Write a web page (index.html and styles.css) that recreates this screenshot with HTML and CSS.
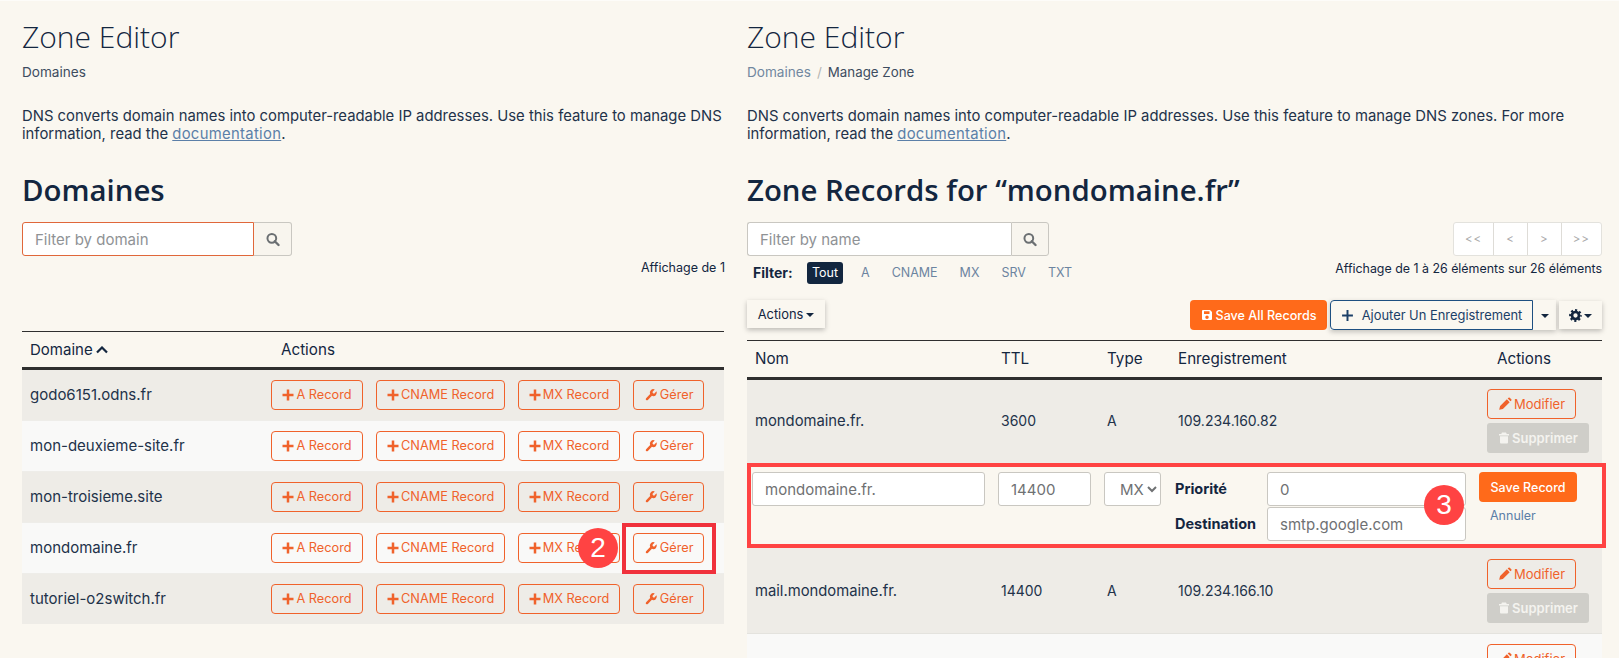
FILE: index.html
```html
<!DOCTYPE html>
<html lang="fr">
<head>
<meta charset="utf-8">
<title>Zone Editor</title>
<link rel="stylesheet" href="styles.css">
</head>
<body>
<svg class="defs" width="0" height="0" aria-hidden="true">
  <symbol id="i-plus" viewBox="0 0 24 24"><path d="M9.500 1h5v8.500H23v5h-8.500V23h-5v-8.500H1v-5h8.500z"/></symbol>
  <symbol id="i-thin-plus" viewBox="0 0 24 24"><path d="M10.200 2h3.600v8.200H22v3.600h-8.200V22h-3.600v-8.200H2v-3.600h8.200z"/></symbol>
  <symbol id="i-wrench" viewBox="0 0 24 24"><path d="M14.700 6.300a1 1 0 0 0 0 1.400l1.600 1.600a1 1 0 0 0 1.400 0l3.770-3.770a6 6 0 0 1-7.940 7.940l-6.910 6.910a2.120 2.120 0 0 1-3-3l6.910-6.910a6 6 0 0 1 7.940-7.940l-3.760 3.760z"/></symbol>
  <symbol id="i-pencil" viewBox="0 0 24 24"><path d="M2 22l1.600-6.400L15.200 4l4.800 4.800L8.400 20.400zM16.600 2.600l1.400-1.400a1.500 1.500 0 0 1 2.100 0l2.700 2.700a1.500 1.500 0 0 1 0 2.100l-1.400 1.400z"/></symbol>
  <symbol id="i-trash" viewBox="0 0 24 24"><path d="M8 1h8l1.500 3H22v3H2V4h4.500zM4 8.500h16V21a2 2 0 0 1-2 2H6a2 2 0 0 1-2-2z"/></symbol>
  <symbol id="i-save" viewBox="0 0 24 24"><path fill-rule="evenodd" d="M4 2h14l4 4v14a2 2 0 0 1-2 2H4a2 2 0 0 1-2-2V4a2 2 0 0 1 2-2zm2 2.500V10h11V4.500zM12 13a3.500 3.500 0 1 0 0 7 3.500 3.500 0 0 0 0-7z"/></symbol>
  <symbol id="i-search" viewBox="0 0 24 24"><circle cx="10" cy="10" r="7.500" fill="none" stroke="currentColor" stroke-width="3.400"/><path d="M15 15l6.500 6.500" stroke="currentColor" stroke-width="4" stroke-linecap="round"/></symbol>
  <symbol id="i-cog" viewBox="0 0 24 24"><circle cx="12" cy="12" r="6.500" fill="none" stroke="currentColor" stroke-width="5"/><circle cx="12" cy="12" r="9.800" fill="none" stroke="currentColor" stroke-width="4" stroke-dasharray="3.900 3.800" stroke-dashoffset="2"/></symbol>
</svg>

<div class="pane pane-left">
  <h1>Zone Editor</h1>
  <div class="crumbs"><span>Domaines</span></div>
  <p class="intro">DNS converts domain names into computer-readable IP addresses. Use this feature to manage DNS<br>information, read the <a href="#">documentation</a>.</p>
  <h2>Domaines</h2>
  <div class="search search-domain">
    <input class="search-input focus" placeholder="Filter by domain">
    <button class="search-btn"><svg class="ico-search"><use href="#i-search"/></svg></button>
  </div>
  <div class="info-left">Affichage de 1</div>

  <div class="dom-table">
    <div class="dom-head">
      <div class="dom-name">Domaine <svg class="chev" viewBox="0 0 12 8"><path d="M1 6.500L6 1.500l5 5" fill="none" stroke="currentColor" stroke-width="2.200"/></svg></div>
      <div class="dom-act-title">Actions</div>
    </div>
    <div class="dom-row">
      <div class="dom-name">godo6151.odns.fr</div>
      <div class="dom-actions">
        <a class="btn b-a"><svg class="ic"><use href="#i-plus"/></svg>A Record</a>
        <a class="btn b-c"><svg class="ic"><use href="#i-plus"/></svg>CNAME Record</a>
        <a class="btn b-m"><svg class="ic"><use href="#i-plus"/></svg>MX Record</a>
        <a class="btn b-g"><svg class="ic ic-w"><use href="#i-wrench"/></svg>Gérer</a>
      </div>
    </div>
    <div class="dom-row">
      <div class="dom-name">mon-deuxieme-site.fr</div>
      <div class="dom-actions">
        <a class="btn b-a"><svg class="ic"><use href="#i-plus"/></svg>A Record</a>
        <a class="btn b-c"><svg class="ic"><use href="#i-plus"/></svg>CNAME Record</a>
        <a class="btn b-m"><svg class="ic"><use href="#i-plus"/></svg>MX Record</a>
        <a class="btn b-g"><svg class="ic ic-w"><use href="#i-wrench"/></svg>Gérer</a>
      </div>
    </div>
    <div class="dom-row">
      <div class="dom-name">mon-troisieme.site</div>
      <div class="dom-actions">
        <a class="btn b-a"><svg class="ic"><use href="#i-plus"/></svg>A Record</a>
        <a class="btn b-c"><svg class="ic"><use href="#i-plus"/></svg>CNAME Record</a>
        <a class="btn b-m"><svg class="ic"><use href="#i-plus"/></svg>MX Record</a>
        <a class="btn b-g"><svg class="ic ic-w"><use href="#i-wrench"/></svg>Gérer</a>
      </div>
    </div>
    <div class="dom-row">
      <div class="dom-name">mondomaine.fr</div>
      <div class="dom-actions">
        <a class="btn b-a"><svg class="ic"><use href="#i-plus"/></svg>A Record</a>
        <a class="btn b-c"><svg class="ic"><use href="#i-plus"/></svg>CNAME Record</a>
        <a class="btn b-m"><svg class="ic"><use href="#i-plus"/></svg>MX Record</a>
        <a class="btn b-g"><svg class="ic ic-w"><use href="#i-wrench"/></svg>Gérer</a>
      </div>
      <span class="step step-2">2</span>
      <span class="mark"></span>
    </div>
    <div class="dom-row">
      <div class="dom-name">tutoriel-o2switch.fr</div>
      <div class="dom-actions">
        <a class="btn b-a"><svg class="ic"><use href="#i-plus"/></svg>A Record</a>
        <a class="btn b-c"><svg class="ic"><use href="#i-plus"/></svg>CNAME Record</a>
        <a class="btn b-m"><svg class="ic"><use href="#i-plus"/></svg>MX Record</a>
        <a class="btn b-g"><svg class="ic ic-w"><use href="#i-wrench"/></svg>Gérer</a>
      </div>
    </div>
  </div>
</div>

<div class="pane pane-right">
  <h1>Zone Editor</h1>
  <div class="crumbs"><a href="#">Domaines</a><span class="sep">/</span><span class="crumb-now">Manage Zone</span></div>
  <p class="intro">DNS converts domain names into computer-readable IP addresses. Use this feature to manage DNS zones. For more<br>information, read the <a href="#">documentation</a>.</p>
  <h2>Zone Records for “mondomaine.fr”</h2>

  <div class="controls">
    <div class="controls-left">
      <div class="search search-name">
        <input class="search-input" placeholder="Filter by name">
        <button class="search-btn"><svg class="ico-search"><use href="#i-search"/></svg></button>
      </div>
      <div class="filters">
        <strong class="filter-label">Filter:</strong>
        <span class="chip">Tout</span>
        <a class="flt">A</a>
        <a class="flt">CNAME</a>
        <a class="flt">MX</a>
        <a class="flt">SRV</a>
        <a class="flt">TXT</a>
      </div>
    </div>
    <div class="controls-right">
      <div class="pager"><span>&lt;&lt;</span><span>&lt;</span><span>&gt;</span><span>&gt;&gt;</span></div>
      <div class="info-right">Affichage de 1 à 26 éléments sur 26 éléments</div>
    </div>
  </div>

  <div class="toolbar">
    <button class="tb-actions">Actions<i class="caret"></i></button>
    <div class="tb-right">
      <button class="tb-save"><svg class="ic-save"><use href="#i-save"/></svg>Save All Records</button>
      <div class="tb-split">
        <button class="tb-add"><svg class="ic-add"><use href="#i-thin-plus"/></svg>Ajouter Un Enregistrement</button>
        <button class="tb-drop"><i class="caret"></i></button>
      </div>
      <button class="tb-gear"><svg class="ic-cog"><use href="#i-cog"/></svg><i class="caret"></i></button>
    </div>
  </div>

  <div class="rec-table">
    <div class="rec-head rec-grid">
      <div>Nom</div><div>TTL</div><div>Type</div><div>Enregistrement</div><div class="act-title">Actions</div>
    </div>
    <div class="rec-row rec-grid r1">
      <div class="cell-name">mondomaine.fr.</div><div>3600</div><div>A</div><div>109.234.160.82</div>
      <div class="rec-actions">
        <a class="btn b-mod"><svg class="ic ic-p"><use href="#i-pencil"/></svg>Modifier</a>
        <a class="btn-off"><svg class="ic"><use href="#i-trash"/></svg>Supprimer</a>
      </div>
    </div>
    <div class="edit-row">
      <input class="field f-name" value="mondomaine.fr.">
      <input class="field f-ttl" value="14400">
      <select class="field f-type"><option>MX</option></select>
      <div class="mx-fields">
        <label>Priorité</label><input class="field" value="0">
        <label>Destination</label><input class="field" value="smtp.google.com">
        <span class="step step-3">3</span>
      </div>
      <div class="edit-actions">
        <button class="btn-save">Save Record</button>
        <a class="cancel">Annuler</a>
      </div>
    </div>
    <div class="rec-row rec-grid r3">
      <div class="cell-name">mail.mondomaine.fr.</div><div>14400</div><div>A</div><div>109.234.166.10</div>
      <div class="rec-actions">
        <a class="btn b-mod"><svg class="ic ic-p"><use href="#i-pencil"/></svg>Modifier</a>
        <a class="btn-off"><svg class="ic"><use href="#i-trash"/></svg>Supprimer</a>
      </div>
    </div>
    <div class="rec-row rec-grid r4">
      <div></div><div></div><div></div><div></div>
      <div class="rec-actions">
        <a class="btn b-mod"><svg class="ic ic-p"><use href="#i-pencil"/></svg>Modifier</a>
      </div>
    </div>
  </div>
</div>
</body>
</html>
```
FILE: styles.css
```css
* { box-sizing: border-box; }
html, body { margin: 0; height: 658px; overflow: hidden; }
body {
  display: flex;
  background: #faf7f0;
  box-shadow: inset 0 1px 0 #fdfcf9;
  color: #13263f;
  font-family: Inter, "Noto Sans", sans-serif;
  font-size: 14px;
  line-height: 18px;
}
.defs { position: absolute; }
a { color: #5b7fa8; }
svg { fill: currentColor; }

.pane { flex: none; padding-left: 22px; }
.pane-left { width: 725px; overflow: hidden; }
.pane-right { width: 880px; }

h1 {
  margin: 19px 0 0;
  font: 300 30px/36px "Open Sans", sans-serif;
  color: #13263f;
}
.crumbs { margin-top: 8px; height: 18px; font-size: 13.600px; color: #3d4c5f; white-space: nowrap; }
.crumbs a { text-decoration: none; color: #71879f; }
.sep { margin: 0 6px 0 6px; color: #b5b5b2; }
.crumb-now { font-size: 13.300px; }
.intro { margin: 26px 0 0; white-space: nowrap; font-size: 14.850px; color: #22324a; }
.intro a { letter-spacing: .3px; }
h2 {
  margin: 27px 0 0;
  font: 600 29.400px/40px "Open Sans", sans-serif;
  color: #13263f;
  white-space: nowrap;
}

.search { display: flex; margin-top: 12px; height: 34px; }
.search-domain { width: 270px; }
.search-name { width: 302px; margin-top: 0; }
.search-input {
  flex: 1;
  min-width: 0;
  height: 34px;
  padding: 0 12px;
  border: 1px solid #c9c7c1;
  border-right: 0;
  border-radius: 3px 0 0 3px;
  background: #fff;
  font: 15px Inter, sans-serif;
  outline: 0;
}
.search-input::placeholder { color: #8f9295; }
.search-input.focus { border: 1px solid #e0673a; }
.search-btn {
  width: 38px;
  height: 34px;
  padding: 0;
  border: 1px solid #c9c7c1;
  border-radius: 0 3px 3px 0;
  background: #f8f5ee;
  color: #6b6f72;
  display: flex;
  align-items: center;
  justify-content: center;
}
.search-domain .search-btn { border-left: 0; }
.ico-search { width: 14px; height: 15px; }
.info-left { margin: 3px 0 0 619px; white-space: nowrap; font-size: 12.500px; color: #13263f; }

.dom-table { margin-top: 54px; width: 702px; }
.dom-head {
  display: flex;
  height: 39px;
  border-top: 1px solid #2f2f2f;
  border-bottom: 3px solid #2f2f2f;
  align-items: center;
}
.dom-name { width: 249px; padding-left: 8px; flex: none; font-size: 15px; white-space: nowrap; color: #22324a; }
.dom-head .dom-name { display: flex; align-items: center; gap: 3px; color: #13263f; }
.dom-act-title { padding-left: 10px; font-size: 15.200px; }
.chev { width: 12px; height: 8px; }
.dom-row {
  position: relative;
  display: flex;
  align-items: center;
  height: 51px;
  background: #f9f9f8;
  border-bottom: 1px solid #eeede9;
}
.dom-row:nth-child(even) { background: #eeece7; }
.dom-row:last-child { height: 50px; border-bottom: 0; }
.dom-actions { display: flex; gap: 13.400px; }

.btn {
  display: inline-flex;
  align-items: center;
  justify-content: center;
  height: 30px;
  border: 1px solid #f0622b;
  border-radius: 4px;
  color: #f0622b;
  font-size: 12.750px;
  white-space: nowrap;
}
.ic { width: 12px; height: 12px; margin-right: 2px; flex: none; }
.ic-w { width: 14px; height: 14px; }
.ic-p { width: 14px; height: 14px; }
.b-a { width: 92px; }
.b-c { width: 128.500px; }
.b-m { width: 101.500px; }
.b-g { width: 71px; }

.step {
  position: absolute;
  width: 40px;
  height: 40px;
  border-radius: 50%;
  background: #ff4343;
  color: #fff;
  font: 28px/40px "Liberation Sans", sans-serif;
  text-align: center;
}
.step-2 { left: 556px; top: 5px; }
.mark {
  position: absolute;
  left: 600px;
  top: 0;
  width: 94px;
  height: 51px;
  border: 4px solid #f0313c;
}

.controls { display: flex; justify-content: space-between; margin-top: 12px; width: 855px; }
.filters { display: flex; align-items: center; height: 22px; margin: 6px 0 0 6px; font-size: 12.500px; }
.filter-label { font-weight: 700; font-size: 14px; width: 54px; }
.chip { width: 36px; height: 22px; line-height: 22px; text-align: center; background: #12263f; color: #fff; border-radius: 3px; margin-right: 18px; }
.flt { color: #6c84a0; margin-right: 22px; }
.controls-right { display: flex; flex-direction: column; align-items: flex-end; }
.pager {
  display: flex;
  width: 149px;
  height: 34px;
  border: 1px solid #e3e2dd;
  border-radius: 3px;
  background: #fff;
  color: #a9a9a9;
  font-size: 11.500px;
}
.pager span { flex: 1; display: flex; align-items: center; justify-content: center; border-left: 1px solid #dedcd7; letter-spacing: 1px; }
.pager span:first-child { border-left: 0; flex: 1.200; }
.pager span:last-child { flex: 1.200; }
.info-right { margin-top: 4px; font-size: 12.400px; white-space: nowrap; }

.toolbar { display: flex; justify-content: space-between; align-items: flex-start; width: 855px; margin-top: 16px; height: 30px; }
.toolbar button { font: 12.900px Inter, sans-serif; padding: 0; }
.tb-actions {
  width: 78px;
  height: 28px;
  border: 0;
  background: #faf7f0;
  color: #13263f;
  box-shadow: 0 2px 5px rgba(0,0,0,.25);
}
.caret {
  display: inline-block;
  margin-left: 3px;
  vertical-align: middle;
  border: 4px solid transparent;
  border-top-color: currentColor;
  border-bottom: 0;
}
.tb-right { display: flex; align-items: center; }
.tb-save {
  width: 137px;
  height: 30px;
  border: 0;
  border-radius: 4px;
  background: #ff6a1a;
  color: #fff;
  display: flex;
  align-items: center;
  justify-content: center;
}
.toolbar .tb-save { font: 500 12.600px Inter, sans-serif; }
.ic-save { width: 12px; height: 12px; margin-right: 3px; }
.tb-split { display: flex; margin-left: 3px; box-shadow: 0 2px 5px rgba(0,0,0,.22); }
.tb-add {
  width: 203px;
  height: 30px;
  border: 1px solid #1d4f81;
  border-radius: 4px 0 0 4px;
  background: #faf7f0;
  color: #1b3f68;
  display: flex;
  align-items: center;
  justify-content: center;
}
.ic-add { width: 13px; height: 13px; margin-right: 8px; }
.tb-drop { width: 23px; height: 30px; border: 0; background: #faf7f0; color: #13263f; }
.tb-drop .caret { margin-left: 0; }
.tb-gear {
  width: 43px;
  height: 28px;
  margin-left: 3px;
  border: 0;
  background: #faf7f0;
  color: #13263f;
  box-shadow: 0 2px 5px rgba(0,0,0,.25);
}
.ic-cog { width: 13px; height: 13px; vertical-align: middle; }
.tb-gear .caret { margin-left: 2px; }

.rec-table { margin-top: 10px; width: 855px; }
.rec-grid { display: grid; grid-template-columns: 246px 106px 71px 317px 115px; align-items: center; }
.rec-grid > div { padding-left: 8px; }
.rec-head {
  height: 40px;
  border-top: 1px solid #2f2f2f;
  border-bottom: 3px solid #2f2f2f;
  color: #13263f;
  font-size: 15.200px;
}
.rec-head .act-title { padding-left: 10px; }
.rec-row { background: #eeece7; color: #22324a; border-bottom: 1px solid #e4e3de; }
.cell-name { font-size: 14.800px; }
.rec-grid > .rec-actions { padding-left: 0; display: flex; flex-direction: column; gap: 4px; align-items: flex-start; }
.r1 { height: 83px; border-bottom: 0; padding-bottom: 1px; }
.r3 { height: 86px; }
.r4 { height: 60px; background: #f9f9f8; align-items: start; padding-top: 10px; }
.b-mod { width: 89px; font-size: 13px; }
.btn-off {
  display: inline-flex;
  align-items: center;
  justify-content: center;
  width: 102px;
  height: 30px;
  border-radius: 3px;
  background: #cfcec9;
  color: #f4f3ef;
  font-size: 13px;
  font-weight: 600;
}
.edit-row {
  display: flex;
  width: 859px;
  height: 85px;
  padding: 5px 0 0 1px;
  border: 4px solid #ff4343;
  background: #faf7f0;
}
.field {
  height: 34px;
  padding: 0 12px;
  border: 1px solid #c9c7c1;
  border-radius: 3px;
  background: #fff;
  color: #6f7173;
  font: 15px Inter, sans-serif;
  outline: 0;
}
.f-name { width: 233px; }
.f-ttl { width: 93px; margin-left: 13px; }
.f-type { width: 57px; margin-left: 13px; padding: 0 0 0 11px; }
.mx-fields {
  position: relative;
  display: grid;
  grid-template-columns: 92px 199px;
  grid-auto-rows: 34px;
  row-gap: 1px;
  align-items: center;
  margin-left: 14px;
}
.mx-fields label { font-size: 14.500px; font-weight: 700; color: #13263f; }
.mx-fields .field { width: 199px; }
.step-3 { right: 2px; top: 13px; }
.edit-actions { display: flex; flex-direction: column; margin-left: 13px; }
.btn-save {
  width: 98px;
  height: 30px;
  padding: 0;
  border: 0;
  border-radius: 4px;
  background: #ff6a1a;
  color: #fff;
  font: 500 12.500px Inter, sans-serif;
}
.cancel { margin: 5px 0 0 11px; font-size: 12.500px; color: #5b7fa8; }
```
